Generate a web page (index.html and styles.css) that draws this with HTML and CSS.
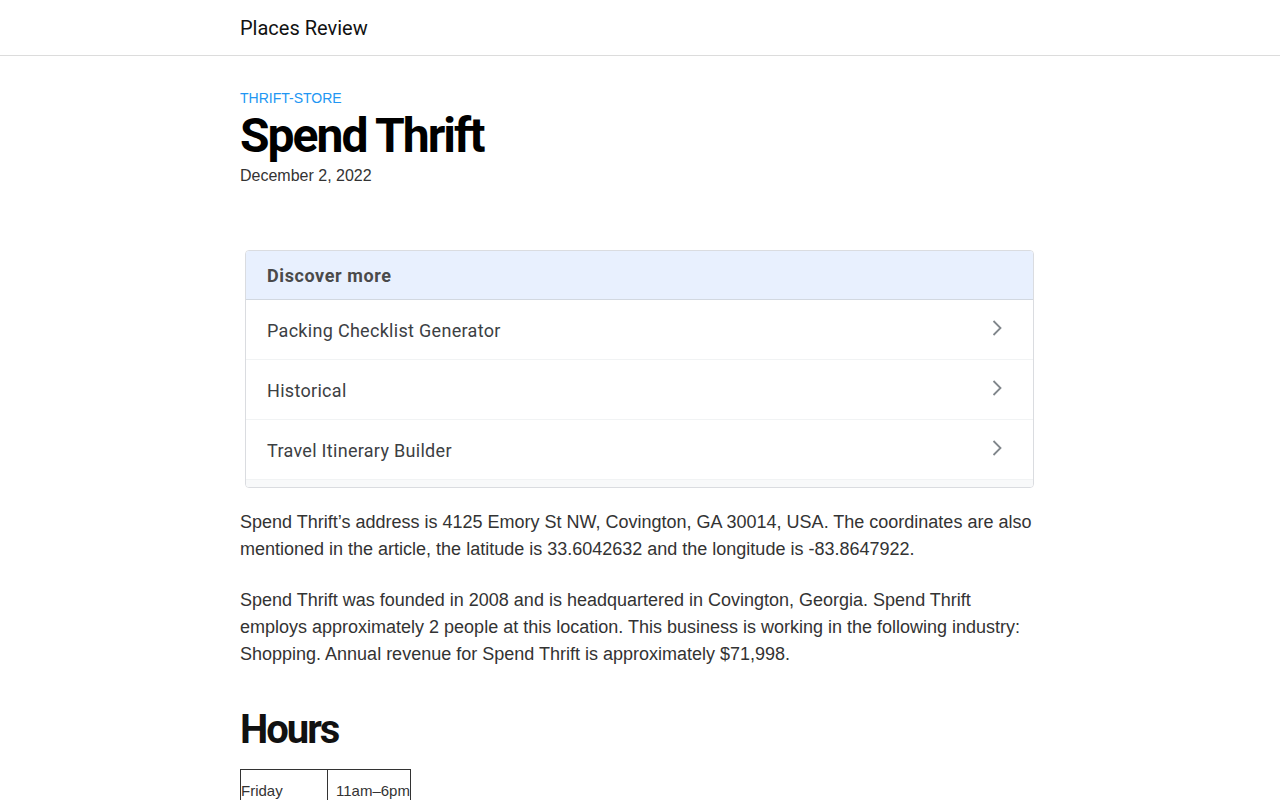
FILE: index.html
```html
<!DOCTYPE html>
<html>
<head>
<meta charset="utf-8">
<title>Spend Thrift - Places Review</title>
<link rel="stylesheet" href="styles.css">
</head>
<body>
<header class="site-header">
  <div class="wrap"><a class="brand" href="#">Places Review</a></div>
</header>
<main class="wrap">
  <div class="category">THRIFT-STORE</div>
  <h1 class="title">Spend Thrift</h1>
  <div class="date">December 2, 2022</div>

  <section class="discover">
    <div class="discover-head">Discover more</div>
    <a class="discover-row" href="#"><span>Packing Checklist Generator</span>
      <svg class="chev" width="12" height="18" viewBox="0 0 12 18"><path d="M2.5 2 L9.5 9 L2.5 16" fill="none" stroke="#80868b" stroke-width="1.8"/></svg></a>
    <a class="discover-row" href="#"><span>Historical</span>
      <svg class="chev" width="12" height="18" viewBox="0 0 12 18"><path d="M2.5 2 L9.5 9 L2.5 16" fill="none" stroke="#80868b" stroke-width="1.8"/></svg></a>
    <a class="discover-row" href="#"><span>Travel Itinerary Builder</span>
      <svg class="chev" width="12" height="18" viewBox="0 0 12 18"><path d="M2.5 2 L9.5 9 L2.5 16" fill="none" stroke="#80868b" stroke-width="1.8"/></svg></a>
    <div class="discover-foot"></div>
  </section>

  <p class="text">Spend Thrift’s address is 4125 Emory St NW, Covington, GA 30014, USA. The coordinates are also mentioned in the article, the latitude is 33.6042632 and the longitude is -83.8647922.</p>
  <p class="text">Spend Thrift was founded in 2008 and is headquartered in Covington, Georgia. Spend Thrift employs approximately 2 people at this location. This business is working in the following industry: Shopping. Annual revenue for Spend Thrift is approximately $71,998.</p>

  <h2 class="section-title">Hours</h2>
  <table class="hours">
    <tr><td class="day">Friday</td><td class="time">11am–6pm</td></tr>
    <tr><td class="day">Saturday</td><td class="time">11am–6pm</td></tr>
  </table>
</main>
</body>
</html>
```
FILE: styles.css
```css
body {
  margin: 0;
  background: #fff;
  font-family: "Liberation Sans", Arial, sans-serif;
  color: #333;
}
.wrap {
  width: 800px;
  margin: 0 auto;
}
.site-header {
  height: 55px;
  border-bottom: 1px solid #dcdcdc;
}
.site-header .wrap {
  height: 55px;
  display: flex;
  align-items: center;
}
.brand {
  font-family: Roboto, sans-serif;
  font-size: 20px;
  color: #111;
  text-decoration: none;
  padding-top: 1px;
}
.category {
  margin-top: 34px;
  font-size: 14px;
  line-height: 16px;
  color: #2196f3;
}
.title {
  margin: 5px 0 0;
  font-family: Roboto, sans-serif;
  font-weight: 700;
  font-size: 48px;
  line-height: 50px;
  letter-spacing: -2px;
  color: #000;
}
.date {
  margin-top: 5px;
  font-size: 16px;
  line-height: 20px;
  color: #333;
}
.discover {
  margin: 64px 6px 0 5px;
  border: 1px solid #dadce0;
  border-radius: 4px;
  overflow: hidden;
  font-family: Roboto, "Open Sans", sans-serif;
}
.discover-head {
  box-sizing: border-box;
  height: 49px;
  background: #e8f0fe;
  border-bottom: 1px solid #d2d8e0;
  display: flex;
  align-items: center;
  padding-left: 21px;
  font-size: 18px;
  font-weight: 700;
  letter-spacing: 0.6px;
  color: #4a4a4a;
}
.discover-row {
  box-sizing: border-box;
  height: 60px;
  border-bottom: 1px solid #f1f3f4;
  display: flex;
  align-items: center;
  justify-content: space-between;
  padding: 2px 30px 0 21px;
  font-size: 18px;
  letter-spacing: 0.3px;
  color: #3c4043;
  text-decoration: none;
}
.discover-row .chev {
  margin-top: -5px;
}
.discover-foot {
  height: 7px;
  background: #f8f9fa;
}
.text {
  margin: 21px 0 24px;
  font-size: 18px;
  line-height: 27px;
  color: #333;
}
.text + .text {
  margin-top: 0;
}
.section-title {
  margin: 40px 0 0;
  font-family: Roboto, sans-serif;
  font-weight: 700;
  font-size: 40px;
  line-height: 44px;
  letter-spacing: -2px;
  color: #111;
}
.hours {
  margin-top: 17px;
  border-collapse: collapse;
  font-size: 15px;
  color: #333;
}
.hours td {
  border: 1px solid #333;
  padding: 12px 0 10px 0;
}
.hours .day {
  width: 86px;
}
.hours .time {
  padding-left: 8px;
}
```
